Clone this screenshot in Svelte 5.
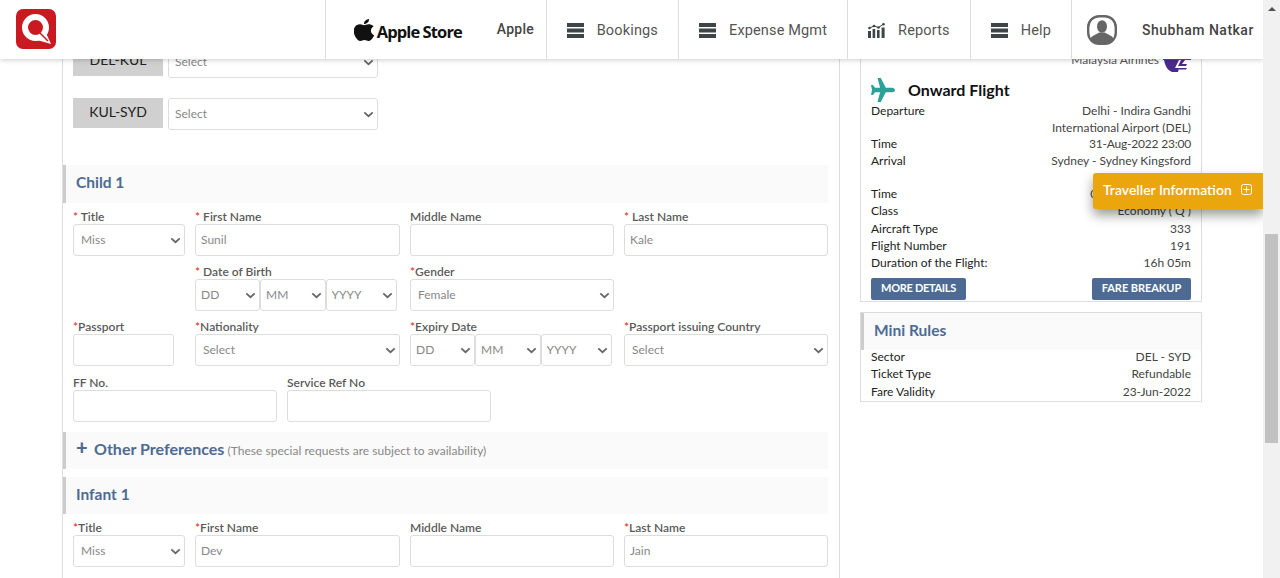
<script>
  const navItems = [
    { label: 'Bookings', icon: 'menu' },
    { label: 'Expense Mgmt', icon: 'menu' },
    { label: 'Reports', icon: 'chart' },
    { label: 'Help', icon: 'menu' }
  ];

  const flightRows = [
    { label: 'Time', value: '31-Aug-2022 23:00', dense: true },
    { label: 'Arrival', value: 'Sydney - Sydney Kingsford', tall: true },
    { label: 'Time', value: '01-Sep-2022 19:35', dense: true },
    { label: 'Class', value: 'Economy ( Q )' },
    { label: 'Aircraft Type', value: '333' },
    { label: 'Flight Number', value: '191' },
    { label: 'Duration of the Flight:', value: '16h 05m' }
  ];

  const ruleRows = [
    { label: 'Sector', value: 'DEL - SYD' },
    { label: 'Ticket Type', value: 'Refundable' },
    { label: 'Fare Validity', value: '23-Jun-2022' }
  ];
</script>

{#snippet dropdown(value, cls = '')}
  <span class="select-wrap {cls}">
    <select>
      <option>{value}</option>
    </select>
    <svg class="chevron" viewBox="0 0 12 8" aria-hidden="true">
      <path d="M1.2 1.5 6 6l4.8-4.5" fill="none" stroke="#666" stroke-width="2" />
    </svg>
  </span>
{/snippet}

{#snippet label(text, star = '')}
  <span class="label">
    {#if star}<span class="star">*</span>{star === 'gap' ? ' ' : ''}{/if}{text}
  </span>
{/snippet}

{#snippet dateParts()}
  <div class="date-parts">
    {@render dropdown('DD', 'dd')}
    {@render dropdown('MM', 'mm')}
    {@render dropdown('YYYY', 'yy')}
  </div>
{/snippet}

{#snippet menuIcon()}
  <svg class="nav-icon" viewBox="0 0 17 15" aria-hidden="true">
    <rect width="17" height="4" fill="#3d4546" />
    <rect y="5.5" width="17" height="4" fill="#3d4546" />
    <rect y="11" width="17" height="4" fill="#3d4546" />
  </svg>
{/snippet}

{#snippet chartIcon()}
  <svg class="nav-icon" viewBox="0 0 17 15" aria-hidden="true">
    <rect y="8" width="3" height="7" fill="#3d4546" />
    <rect x="4.6" y="6" width="2.6" height="9" fill="#3d4546" />
    <rect x="9" y="7" width="2.6" height="8" fill="#3d4546" />
    <rect x="13.6" y="4.5" width="3" height="10.500" fill="#3d4546" />
    <path d="M1.500 5 6 3l4.500 1.500L15.500 1" fill="none" stroke="#3d4546" stroke-width="1" />
    <circle cx="1.500" cy="5" r="1.300" fill="#3d4546" />
    <circle cx="6" cy="3" r="1.300" fill="#3d4546" />
    <circle cx="10.500" cy="4.500" r="1.300" fill="#3d4546" />
    <circle cx="15.500" cy="1.300" r="1.300" fill="#3d4546" />
  </svg>
{/snippet}

<div class="page">
  <div class="view">
    <div class="columns">
      <main class="form-col">
        <div class="route">
          <span class="tag">DEL-KUL</span>
          {@render dropdown('Select', 'route-select')}
        </div>
        <div class="route">
          <span class="tag">KUL-SYD</span>
          {@render dropdown('Select', 'route-select')}
        </div>

        <h3 class="section child-head">Child 1</h3>

        <div class="grid">
          <div class="field">
            {@render label('Title', 'gap')}
            {@render dropdown('Miss')}
          </div>
          <div class="field">
            {@render label('First Name', 'gap')}
            <input type="text" value="Sunil" />
          </div>
          <div class="field">
            {@render label('Middle Name')}
            <input type="text" />
          </div>
          <div class="field">
            {@render label('Last Name', 'gap')}
            <input type="text" value="Kale" />
          </div>

          <div class="field second">
            {@render label('Date of Birth', 'gap')}
            {@render dateParts()}
          </div>
          <div class="field">
            {@render label('Gender', 'tight')}
            {@render dropdown('Female')}
          </div>
          <div></div>

          <div class="field">
            {@render label('Passport', 'tight')}
            <input class="passport" type="text" />
          </div>
          <div class="field">
            {@render label('Nationality', 'tight')}
            {@render dropdown('Select')}
          </div>
          <div class="field">
            {@render label('Expiry Date', 'tight')}
            {@render dateParts()}
          </div>
          <div class="field">
            {@render label('Passport issuing Country', 'tight')}
            {@render dropdown('Select')}
          </div>
        </div>

        <div class="two-up">
          <div class="field">
            {@render label('FF No.')}
            <input type="text" />
          </div>
          <div class="field">
            {@render label('Service Ref No')}
            <input type="text" />
          </div>
        </div>

        <div class="section prefs">
          <span class="plus">+</span>
          <span class="prefs-title">Other Preferences</span>
          <span class="prefs-note">(These special requests are subject to availability)</span>
        </div>

        <h3 class="section infant-head">Infant 1</h3>

        <div class="grid">
          <div class="field">
            {@render label('Title', 'tight')}
            {@render dropdown('Miss')}
          </div>
          <div class="field">
            {@render label('First Name', 'tight')}
            <input type="text" value="Dev" />
          </div>
          <div class="field">
            {@render label('Middle Name')}
            <input type="text" />
          </div>
          <div class="field">
            {@render label('Last Name', 'tight')}
            <input type="text" value="Jain" />
          </div>
        </div>
      </main>

      <aside class="side-col">
        <section class="card flight">
          <div class="airline">
            <span>Malaysia Airlines</span>
            <svg class="airline-logo" viewBox="0 0 28 24" aria-hidden="true">
              <path d="M0 10h28v1H0z" fill="#c4262e" />
              <path d="M1 11h15l-4 8h4l-1 4H9C4 21 2 16 1 11z" fill="#4b2a8c" />
              <path d="M18 11h4l-3 4h5l-1 2H15z" fill="#4b2a8c" />
              <path d="M16 19h8l-1 1.500h-8z" fill="#4b2a8c" />
            </svg>
          </div>
          <div class="flight-title">
            <svg class="plane" viewBox="0 0 24 24" aria-hidden="true">
              <path d="M6.500 0h3.300l5 9.700H21c1.700 0 3 1 3 2.300s-1.300 2.300-3 2.300h-6.200l-5 9.700H6.500l2.600-9.700H4L2 17H0l1-5-1-5h2l2 2.700h5.100z" fill="#2aa297" />
            </svg>
            <h3>Onward Flight</h3>
          </div>
          <div class="row tall">
            <span class="key">Departure</span>
            <span class="val">Delhi - Indira Gandhi<br />International Airport (DEL)</span>
          </div>
          {#each flightRows as row}
            <div class="row" class:tall={row.tall}>
              <span class="key">{row.label}</span>
              <span class="val" class:dense={row.dense}>{row.value}</span>
            </div>
          {/each}
          <div class="actions">
            <button class="more">MORE DETAILS</button>
            <button class="fare">FARE BREAKUP</button>
          </div>
        </section>

        <section class="card rules">
          <h3 class="section rules-head">Mini Rules</h3>
          <div class="rules-body">
            {#each ruleRows as row}
              <div class="row">
                <span class="key">{row.label}</span>
                <span class="val">{row.value}</span>
              </div>
            {/each}
          </div>
        </section>
      </aside>
    </div>

    <header class="topbar">
      <div class="logo">
        <svg viewBox="0 0 40 40" aria-hidden="true">
          <rect width="40" height="40" rx="7" fill="#c81a20" />
          <circle cx="19.500" cy="18.500" r="10.500" fill="none" stroke="#fff" stroke-width="6" />
          <path d="M21 31l9-7 5 11z" fill="#fff" />
          <path d="M23 23l9 9" stroke="#c81a20" stroke-width="1.500" />
        </svg>
      </div>

      <nav class="nav">
        <div class="store">
          <svg class="apple" viewBox="2.500 0 19 24" preserveAspectRatio="none" aria-hidden="true">
            <path d="M12.152 6.896c-.948 0-2.415-1.078-3.96-1.04-2.04.027-3.91 1.183-4.961 3.014-2.117 3.675-.546 9.103 1.519 12.09 1.013 1.454 2.208 3.09 3.792 3.039 1.52-.065 2.09-.987 3.935-.987 1.831 0 2.35.987 3.96.948 1.637-.026 2.676-1.48 3.676-2.948 1.156-1.688 1.636-3.325 1.662-3.415-.039-.013-3.182-1.221-3.22-4.857-.026-3.04 2.48-4.494 2.597-4.559-1.429-2.09-3.623-2.324-4.39-2.376-2-.156-3.675 1.09-4.61 1.09zM15.53 3.83c.843-1.012 1.4-2.427 1.245-3.83-1.207.052-2.662.805-3.532 1.818-.78.896-1.454 2.338-1.273 3.714 1.338.104 2.715-.688 3.559-1.701" fill="#111" />
          </svg>
          <span class="store-name">Apple Store</span>
          <span class="store-user">Apple</span>
        </div>
        {#each navItems as item}
          <div class="nav-item">
            {#if item.icon === 'menu'}
              {@render menuIcon()}
            {:else}
              {@render chartIcon()}
            {/if}
            <span>{item.label}</span>
          </div>
        {/each}
        <div class="user">
          <svg class="avatar" viewBox="0 0 30 30" aria-hidden="true">
            <rect x="1.200" y="1.200" width="27.600" height="27.600" rx="11" fill="#fff" stroke="#666" stroke-width="2.400" />
            <ellipse cx="15" cy="11.500" rx="5" ry="6.200" fill="#666" />
            <path d="M3 25c1-5 7-5.500 9-7.500h6c2 2 8 2.500 9 7.500-3 3.500-7 4-12 4s-9-.5-12-4z" fill="#666" />
          </svg>
          <span>Shubham Natkar</span>
        </div>
      </nav>
    </header>

    <div class="traveller-tab">
      <span>Traveller Information</span>
      <svg viewBox="0 0 11 11" aria-hidden="true">
        <rect x=".5" y=".5" width="10" height="10" rx="2" fill="none" stroke="#fff" />
        <path d="M5.500 2.500v6M2.500 5.500h6" stroke="#fff" />
      </svg>
    </div>
  </div>

  <div class="scrollbar">
    <span class="arrow"></span>
    <span class="thumb"></span>
  </div>
</div>

<style>
  :global(body) {
    margin: 0;
    background: #fff;
    font-family: Lato, "Liberation Sans", sans-serif;
  }

  .page {
    display: flex;
    height: 578px;
    overflow: hidden;
  }

  .view {
    position: relative;
    flex: 1;
    min-width: 0;
    height: 578px;
    overflow: hidden;
  }

  .columns {
    display: flex;
    align-items: flex-start;
    gap: 20px;
    padding-left: 62px;
  }

  /* left column */
  .form-col {
    box-sizing: border-box;
    width: 778px;
    height: 578px;
    padding: 46px 11px 0 10px;
    border-left: 1px solid #ddd;
    border-right: 1px solid #ddd;
  }

  .route {
    display: flex;
    align-items: flex-start;
    gap: 5px;
    margin-bottom: 20px;
  }

  .tag {
    width: 90px;
    height: 30px;
    background: #d0d0d0;
    color: #222;
    font-size: 14px;
    line-height: 28px;
    text-align: center;
  }

  .section {
    box-sizing: border-box;
    margin: 0 0 0 -10px;
    border-left: 3px solid #ccc;
    background: #fafafa;
    color: #4d6b92;
    font-size: 15.500px;
    font-weight: 700;
    padding-left: 10px;
  }

  .child-head {
    height: 38px;
    margin-top: 35px;
    margin-bottom: 7px;
    line-height: 35px;
  }

  .infant-head {
    height: 37px;
    margin-top: 8px;
    margin-bottom: 7px;
    line-height: 35px;
  }

  .grid {
    display: grid;
    grid-template-columns: 112px 205px 204px 204px;
    column-gap: 10px;
    row-gap: 9px;
  }

  .field {
    display: flex;
    flex-direction: column;
    align-items: stretch;
    min-width: 0;
  }

  .second {
    grid-column: 2;
  }

  .two-up {
    display: grid;
    grid-template-columns: 204px 204px;
    column-gap: 10px;
    margin-top: 10px;
  }

  .label {
    height: 14px;
    color: #5a5a5a;
    font-size: 12px;
    font-weight: 600;
    line-height: 13px;
    white-space: pre;
  }

  .star {
    color: #e6393c;
  }

  input,
  select {
    box-sizing: border-box;
    width: 100%;
    height: 32px;
    border: 1px solid #ddd;
    border-radius: 3px;
    background: #fff;
    color: #888;
    font-family: inherit;
    font-size: 12px;
    margin: 0;
    outline: none;
  }

  input {
    padding: 0 5px 2px;
  }

  select {
    appearance: none;
    padding: 0 7px 2px;
  }

  .passport {
    width: 101px;
  }

  .select-wrap {
    position: relative;
    display: block;
  }

  .chevron {
    position: absolute;
    top: 13px;
    right: 4px;
    width: 11px;
    height: 7px;
    pointer-events: none;
  }

  .route-select {
    width: 210px;
  }

  .route-select select {
    padding-left: 6px;
  }

  .date-parts {
    display: flex;
  }

  .dd {
    width: 65px;
  }

  .mm {
    width: 65.500px;
  }

  .yy {
    width: 71.500px;
  }

  .dd select,
  .mm select,
  .yy select {
    padding-left: 5px;
  }

  .prefs {
    display: flex;
    align-items: baseline;
    height: 37px;
    margin-top: 10px;
    line-height: 31px;
  }

  .plus {
    width: 18px;
    font-size: 20px;
    font-weight: 900;
  }

  .prefs-title {
    font-size: 16px;
  }

  .prefs-note {
    margin-left: 3px;
    color: #888;
    font-size: 12px;
    font-weight: 400;
    letter-spacing: 0.03px;
  }

  /* right column */
  .side-col {
    width: 342px;
    padding-top: 30px;
  }

  .card {
    box-sizing: border-box;
    border: 1px solid #ddd;
    color: #222;
    font-size: 12px;
  }

  .flight {
    padding: 0 10px 1px;
  }

  .airline {
    display: flex;
    justify-content: flex-end;
    align-items: center;
    gap: 4px;
    box-sizing: border-box;
    height: 47px;
    color: #555;
    padding-top: 9px;
  }

  .airline-logo {
    width: 28px;
    height: 24px;
    margin-top: 3px;
  }

  .flight-title {
    display: flex;
    align-items: center;
    gap: 13px;
    height: 24px;
  }

  .flight-title h3 {
    margin: 0;
    padding-bottom: 1px;
    color: #111;
    font-size: 16px;
    font-weight: 700;
  }

  .plane {
    width: 24px;
    height: 24px;
  }

  .row {
    display: flex;
    justify-content: space-between;
    line-height: 17.200px;
  }

  .tall {
    min-height: 33px;
    max-height: 33px;
  }

  .key {
    color: #222;
  }

  .val {
    color: #444;
    text-align: right;
    padding-top: 1px;
    margin-bottom: -1px;
    line-height: 16.500px;
  }

  .dense {
    letter-spacing: -0.2px;
  }

  .actions {
    display: flex;
    justify-content: space-between;
    margin-top: 7px;
  }

  button {
    height: 22px;
    padding: 0 0 3px;
    border: 0;
    border-radius: 2px;
    background: #4d6b92;
    color: #fff;
    font-family: inherit;
    font-size: 11px;
    font-weight: 700;
  }

  .more {
    width: 95px;
    letter-spacing: -0.3px;
  }

  .fare {
    width: 99px;
    letter-spacing: -0.05px;
  }

  .rules {
    margin-top: 10px;
    height: 90px;
  }

  .rules-head {
    height: 37px;
    margin: 0;
    line-height: 35px;
    padding-left: 10px;
  }

  .rules-body {
    padding: 0 10px;
    margin-top: -2px;
  }

  /* fixed bar over the scrolled page */
  .topbar {
    position: absolute;
    top: 0;
    left: 0;
    right: 0;
    display: flex;
    justify-content: space-between;
    height: 59px;
    background: #fff;
    box-shadow: 0 1px 5px rgba(0, 0, 0, 0.2);
  }

  .logo {
    padding: 9px 0 0 16px;
  }

  .logo svg {
    display: block;
    width: 40px;
    height: 40px;
  }

  .nav {
    display: flex;
    height: 59px;
  }

  .store {
    display: flex;
    align-items: center;
    width: 221px;
    box-sizing: border-box;
    padding-left: 28px;
    border-left: 1px solid #ddd;
  }

  .apple {
    width: 20px;
    height: 22px;
    margin-right: 3px;
  }

  .store-name {
    width: 120px;
    color: #111;
    font-family: "Open Sans", sans-serif;
    font-size: 16.500px;
    font-weight: 700;
    letter-spacing: -0.9px;
    padding-top: 3px;
  }

  .store-user {
    color: #444;
    font-family: Roboto, sans-serif;
    font-size: 14px;
    font-weight: 500;
    letter-spacing: 0.3px;
    padding-bottom: 2px;
  }

  .nav-item {
    display: flex;
    align-items: center;
    gap: 13px;
    padding: 0 20px;
    border-left: 1px solid #ddd;
    color: #555;
    font-family: Roboto, sans-serif;
    font-size: 14.500px;
    letter-spacing: 0.15px;
  }

  .nav-item span {
    padding-top: 1px;
  }

  .nav-icon {
    width: 17px;
    height: 15px;
    margin-top: 2px;
  }

  .user {
    display: flex;
    align-items: center;
    box-sizing: border-box;
    width: 192px;
    gap: 25px;
    padding-left: 15px;
    border-left: 1px solid #ddd;
    color: #444;
    font-family: Roboto, sans-serif;
    font-size: 14px;
    font-weight: 500;
    letter-spacing: 0.5px;
  }

  .avatar {
    width: 30px;
    height: 30px;
  }

  .traveller-tab {
    position: absolute;
    top: 173px;
    right: 0;
    box-sizing: border-box;
    display: flex;
    align-items: center;
    gap: 9px;
    width: 170px;
    height: 36px;
    padding: 0 0 3px 10px;
    border-radius: 3px 0 0 3px;
    background: #eaa60c;
    box-shadow: 0 6px 12px rgba(0, 0, 0, 0.4);
    color: #fff;
    font-size: 14px;
    font-weight: 600;
  }

  .traveller-tab svg {
    width: 11px;
    height: 11px;
  }

  .scrollbar {
    position: relative;
    width: 17px;
    height: 578px;
    background: #f1f1f1;
  }

  .arrow {
    position: absolute;
    top: 7px;
    left: 5px;
    border-left: 4px solid transparent;
    border-right: 4px solid transparent;
    border-bottom: 4px solid #505050;
  }

  .thumb {
    position: absolute;
    top: 234px;
    left: 2px;
    width: 13px;
    height: 209px;
    background: #c1c1c1;
  }
</style>
